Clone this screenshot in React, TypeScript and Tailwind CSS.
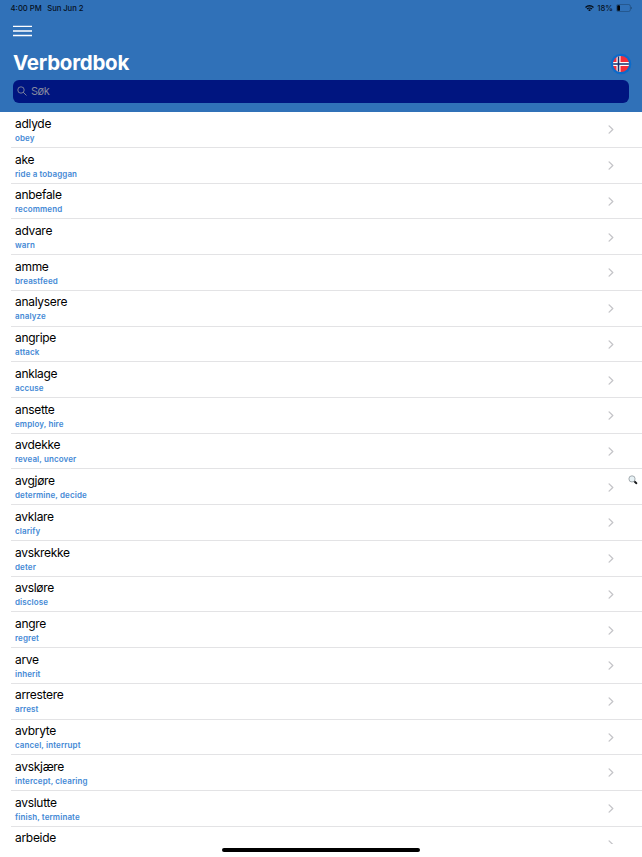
type Verb = { word: string; meaning?: string }

const VERBS: Verb[] = [
  { word: 'adlyde', meaning: 'obey' },
  { word: 'ake', meaning: 'ride a tobaggan' },
  { word: 'anbefale', meaning: 'recommend' },
  { word: 'advare', meaning: 'warn' },
  { word: 'amme', meaning: 'breastfeed' },
  { word: 'analysere', meaning: 'analyze' },
  { word: 'angripe', meaning: 'attack' },
  { word: 'anklage', meaning: 'accuse' },
  { word: 'ansette', meaning: 'employ, hire' },
  { word: 'avdekke', meaning: 'reveal, uncover' },
  { word: 'avgjøre', meaning: 'determine, decide' },
  { word: 'avklare', meaning: 'clarify' },
  { word: 'avskrekke', meaning: 'deter' },
  { word: 'avsløre', meaning: 'disclose' },
  { word: 'angre', meaning: 'regret' },
  { word: 'arve', meaning: 'inherit' },
  { word: 'arrestere', meaning: 'arrest' },
  { word: 'avbryte', meaning: 'cancel, interrupt' },
  { word: 'avskjære', meaning: 'intercept, clearing' },
  { word: 'avslutte', meaning: 'finish, terminate' },
  { word: 'arbeide' },
]

function MenuIcon() {
  return (
    <svg viewBox="0 0 19 12" className="h-3 w-[19px]" stroke="#fff" strokeWidth="1.3" aria-hidden>
      <path d="M0 1.4h19M0 6h19M0 10.5h19" />
    </svg>
  )
}

function WifiIcon() {
  return (
    <svg viewBox="0 0 18 13" className="h-[6.5px] w-[9px]" fill="none" stroke="#06101c" strokeWidth="2.7" aria-hidden>
      <path d="M1 4.8a11.4 11.4 0 0 1 16 0" />
      <path d="M4 8.2a7.1 7.1 0 0 1 10 0" />
      <path d="M6.2 10.1a3.9 3.9 0 0 1 5.6 0L9 13z" fill="#06101c" stroke="none" />
    </svg>
  )
}

function BatteryIcon() {
  return (
    <svg viewBox="0 0 17 8" className="h-2 w-[17px]" aria-hidden>
      <rect x="0.4" y="0.4" width="14" height="7.2" rx="2.1" fill="none" stroke="#1f4a78" strokeWidth="0.7" />
      <rect x="1.2" y="1.2" width="2.8" height="5.6" rx="0.9" fill="#000" />
      <path d="M15.2 2.8a1.3 1.3 0 0 1 0 2.4z" fill="#1f4a78" />
    </svg>
  )
}

function NorwayFlag() {
  return (
    <svg viewBox="0 0 22 22" className="size-[22px]" aria-hidden>
      <defs>
        <clipPath id="flag-circle">
          <circle cx="11" cy="11" r="8" />
        </clipPath>
      </defs>
      <circle cx="11" cy="11" r="10.3" fill="#0b6bcb" />
      <g clipPath="url(#flag-circle)">
        <rect width="22" height="22" fill="#f52d38" />
        <path d="M8.5 0v22M0 11h22" stroke="#fff" strokeWidth="4" />
        <path d="M8.5 0v22M0 11h22" stroke="#17306e" strokeWidth="1.6" />
      </g>
    </svg>
  )
}

function Chevron() {
  return (
    <svg viewBox="0 0 6 9" className="h-[9px] w-1.5" fill="none" stroke="#c4c4c8" strokeWidth="1.3" aria-hidden>
      <path d="M1.1 0.9 4.8 4.5 1.1 8.1" strokeLinecap="round" strokeLinejoin="round" />
    </svg>
  )
}

function IndexMagnifier() {
  return (
    <svg viewBox="0 0 10 10" className="size-[10px]" aria-hidden>
      <path d="M6 6 8.4 8.2" stroke="#17191c" strokeWidth="1.9" strokeLinecap="round" />
      <circle cx="4" cy="3.9" r="3.1" fill="#e7f1f5" stroke="#92999d" strokeWidth="0.8" />
    </svg>
  )
}

function Header() {
  return (
    <header className="h-28 shrink-0 bg-[#3071b8]">
      <div className="flex h-4 items-center justify-between pr-[9px] pl-[10.5px] text-[7.7px] font-medium text-[#06101c]">
        <div className="flex gap-[5.5px] pt-px">
          <span>4:00 PM</span>
          <span className="tracking-[-0.08px]">Sun Jun 2</span>
        </div>
        <div className="flex items-center gap-[3px]">
          <WifiIcon />
          <span className="pt-px">18%</span>
          <BatteryIcon />
        </div>
      </div>

      <button type="button" aria-label="Menu" className="mt-[9px] ml-[13px] block h-3">
        <MenuIcon />
      </button>

      <div className="mt-[11px] flex h-[32px] justify-between pr-[10px] pl-[13px]">
        <h1 className="mt-[1.5px] text-[20.5px] leading-[26px] font-bold tracking-[-0.25px] text-white">Verbordbok</h1>
        <div className="mt-[5px] flex">
          <NorwayFlag />
        </div>
      </div>

      <div className="mr-[13px] ml-[13px] flex h-[22.5px] items-center gap-[4px] rounded-[6px] bg-[#001580] pl-[4px]">
        <svg viewBox="0 0 10 10" className="size-[10px]" fill="none" stroke="#858a9f" strokeWidth="0.9" aria-hidden>
          <circle cx="4" cy="4" r="3.2" />
          <path d="M6.4 6.4 9.2 9.2" strokeLinecap="round" />
        </svg>
        <span className="text-[11px] leading-none tracking-[-0.5px] text-[#858a9f]">Søk</span>
      </div>
    </header>
  )
}

function VerbRow({ word, meaning }: Verb) {
  return (
    <li className="group ml-[10.5px] flex h-[35.72px] shrink-0 justify-between border-b border-[#e3e3e5] pr-7 pl-[4.5px] last:h-5 last:border-b-0">
      <div>
        <p className="pt-[3.6px] text-[12px] leading-4 tracking-[-0.3px] text-black">{word}</p>
        {meaning && (
          <p className="mt-[1px] text-[8px] leading-[11px] font-semibold tracking-[0.11px] text-[#4489d5]">{meaning}</p>
        )}
      </div>
      <div className="mt-[13.2px] group-last:h-1 group-last:overflow-hidden">
        <Chevron />
      </div>
    </li>
  )
}

export default function App() {
  return (
    <div className="relative flex h-[857px] w-[642px] flex-col overflow-hidden bg-white font-['Inter',sans-serif]">
      <Header />
      <ul className="flex flex-col pt-[0.3px]">
        {VERBS.map((verb) => (
          <VerbRow key={verb.word} {...verb} />
        ))}
      </ul>

      {/* section index */}
      <div className="absolute top-[475px] right-[4.5px]">
        <IndexMagnifier />
      </div>

      {/* home indicator */}
      <div className="absolute bottom-[5px] left-1/2 h-1 w-[198px] -translate-x-1/2 rounded-full bg-black" />
    </div>
  )
}
